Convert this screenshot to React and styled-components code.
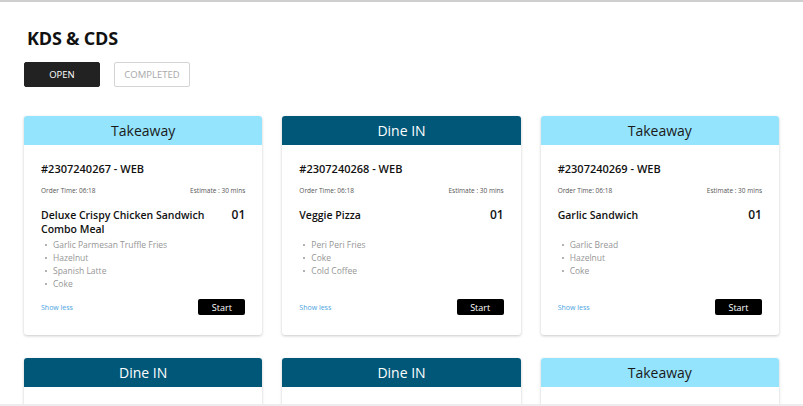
import React from "react"
import styled, { createGlobalStyle } from "styled-components"

const GlobalStyle = createGlobalStyle`
  html, body {
    margin: 0;
    padding: 0;
    background: #fff;
  }
  body {
    font-family: "Open Sans", "Noto Sans", sans-serif;
    color: #111;
  }
  * { box-sizing: border-box; }
`

const Page = styled.div`
  height: 406px;
  overflow: hidden;
  border-top: 2px solid #cfcfcf;
  border-bottom: 2px solid #ececec;
  padding: 0 24px;
`

const Title = styled.h1`
  margin: 24px 0 0 3px;
  font-size: 18px;
  font-weight: 700;
  letter-spacing: -0.2px;
  line-height: 24px;
`

const Tabs = styled.div`
  display: flex;
  gap: 14px;
  margin-top: 12px;
`

const Tab = styled.button`
  width: 76px;
  height: 25px;
  font-family: inherit;
  font-size: 9.5px;
  border-radius: 2px;
  cursor: pointer;
  background: ${p => (p.$active ? "#222" : "#fff")};
  color: ${p => (p.$active ? "#fff" : "#a8a8a8")};
  border: 1px solid ${p => (p.$active ? "#222" : "#d4d4d4")};
`

const Grid = styled.div`
  display: grid;
  grid-template-columns: repeat(3, 1fr);
  column-gap: 20px;
  row-gap: 23px;
  margin-top: 29px;
`

const Card = styled.div`
  display: flex;
  flex-direction: column;
  background: #fff;
  border-radius: 3px;
  box-shadow: 0 1px 3px rgba(0, 0, 0, 0.22);
  min-height: ${p => (p.$stub ? "60px" : "auto")};
`

const Header = styled.div`
  height: 29px;
  display: flex;
  align-items: center;
  justify-content: center;
  font-size: 14px;
  border-radius: 3px 3px 0 0;
  background: ${p => (p.$dine ? "#005778" : "#94e4fd")};
  color: ${p => (p.$dine ? "#fff" : "#1a1a1a")};
`

const Body = styled.div`
  flex: 1;
  display: flex;
  flex-direction: column;
  padding: 16px 17px 20px 17px;
`

const OrderNo = styled.div`
  font-size: 11px;
  font-weight: 600;
  line-height: 15px;
`

const Meta = styled.div`
  display: flex;
  justify-content: space-between;
  font-size: 6.5px;
  line-height: 9px;
  color: #555;
  margin-top: 10px;
`

const ItemRow = styled.div`
  display: flex;
  justify-content: space-between;
  align-items: flex-start;
  margin-top: 13px;
  min-height: 28px;
`

const ItemName = styled.div`
  font-size: 10.5px;
  font-weight: 600;
  line-height: 14px;
  max-width: 175px;
`

const Qty = styled.div`
  font-size: 12px;
  font-weight: 600;
  line-height: 14px;
`

const Addons = styled.ul`
  list-style: none;
  margin: 2px 0 0 0;
  padding: 0 0 0 4px;
`

const Addon = styled.li`
  display: flex;
  align-items: center;
  height: 13px;
  font-size: 8.5px;
  color: #969696;
  &:before {
    content: "";
    width: 2px;
    height: 2px;
    border-radius: 50%;
    background: #999;
    margin-right: 6px;
  }
`

const Footer = styled.div`
  display: flex;
  justify-content: space-between;
  align-items: center;
  margin-top: auto;
  padding-top: 9px;
`

const ShowLess = styled.a`
  font-size: 7px;
  color: #4aa3e0;
  text-decoration: none;
  cursor: pointer;
`

const StartButton = styled.button`
  width: 47px;
  height: 16px;
  background: #000;
  color: #fff;
  border: none;
  border-radius: 2px;
  font-family: inherit;
  font-size: 9px;
  cursor: pointer;
`

const orders = [
  {
    type: "Takeaway",
    no: "2307240267",
    item: "Deluxe Crispy Chicken Sandwich Combo Meal",
    addons: ["Garlic Parmesan Truffle Fries", "Hazelnut", "Spanish Latte", "Coke"],
  },
  {
    type: "Dine IN",
    no: "2307240268",
    item: "Veggie Pizza",
    addons: ["Peri Peri Fries", "Coke", "Cold Coffee"],
  },
  {
    type: "Takeaway",
    no: "2307240269",
    item: "Garlic Sandwich",
    addons: ["Garlic Bread", "Hazelnut", "Coke"],
  },
]

const nextRow = ["Dine IN", "Dine IN", "Takeaway"]

export default function App() {
  return (
    <>
      <GlobalStyle />
      <Page>
        <Title>KDS &amp; CDS</Title>
        <Tabs>
          <Tab $active>OPEN</Tab>
          <Tab>COMPLETED</Tab>
        </Tabs>
        <Grid>
          {orders.map(o => (
            <Card key={o.no}>
              <Header $dine={o.type === "Dine IN"}>{o.type}</Header>
              <Body>
                <OrderNo>#{o.no} - WEB</OrderNo>
                <Meta>
                  <span>Order Time: 06:18</span>
                  <span>Estimate : 30 mins</span>
                </Meta>
                <ItemRow>
                  <ItemName>{o.item}</ItemName>
                  <Qty>01</Qty>
                </ItemRow>
                <Addons>
                  {o.addons.map(a => (
                    <Addon key={a}>{a}</Addon>
                  ))}
                </Addons>
                <Footer>
                  <ShowLess>Show less</ShowLess>
                  <StartButton>Start</StartButton>
                </Footer>
              </Body>
            </Card>
          ))}
          {nextRow.map((t, i) => (
            <Card key={i} $stub>
              <Header $dine={t === "Dine IN"}>{t}</Header>
            </Card>
          ))}
        </Grid>
      </Page>
    </>
  )
}
